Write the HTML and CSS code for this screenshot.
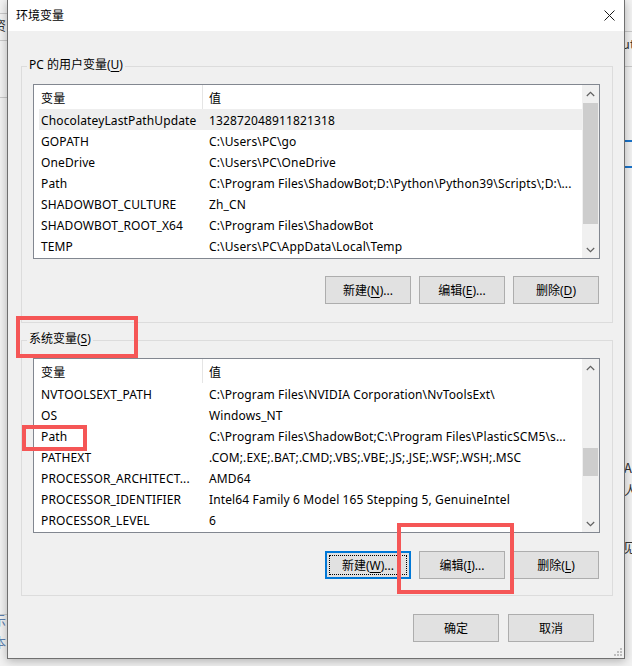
FILE: index.html
```html
<!DOCTYPE html>
<html lang="zh-CN">
<head>
<meta charset="utf-8">
<title>环境变量</title>
<link rel="stylesheet" href="styles.css">
</head>
<body>
<div class="desktop">
  <div class="backdrop">
    <div class="bg-line" style="top:13px;left:0;width:8px"></div>
    <div class="bg-line" style="top:40px;left:0;width:8px"></div>
    <div class="bg-line" style="top:97px;left:0;width:8px"></div>
    <div class="bg-text" style="top:17px;left:-7px">资</div>
    <div class="bg-line" style="top:31px;left:624px;width:8px"></div>
    <div class="bg-text" style="top:36px;left:622px">ut</div>
    <div class="bg-line" style="top:66px;left:624px;width:8px"></div>
    <div class="bg-line blue" style="top:140px;left:624px;width:8px"></div>
    <div class="bg-line blue" style="top:166px;left:624px;width:8px"></div>
    <div class="bg-text" style="top:460px;left:624px">AI</div>
    <div class="bg-text" style="top:482px;left:624px">人</div>
    <div class="bg-text" style="top:539px;left:623px">见</div>
    <div class="bg-line" style="top:614px;left:0;width:8px"></div>
    <div class="bg-text colored" style="top:612px;left:-7px">示</div>
    <div class="bg-text colored" style="top:634px;left:-7px">本</div>
  </div>

  <div class="dialog">
    <div class="titlebar">
      <span class="title">环境变量</span>
      <span class="close">
        <svg width="11" height="11" viewBox="0 0 11 11"><path d="M0.5 0.5 L10.5 10.5 M10.5 0.5 L0.5 10.5" stroke="#1a1a1a" stroke-width="1" fill="none"/></svg>
      </span>
    </div>

    <div class="dialog-body">
      <section class="group group-user">
        <div class="legend">PC 的用户变量(<u>U</u>)</div>
        <div class="listview">
          <div class="lv-main">
            <div class="lv-header"><div class="c1">变量</div><div class="c2">值</div></div>
            <div class="lv-row selected"><div class="c1">ChocolateyLastPathUpdate</div><div class="c2">132872048911821318</div></div>
            <div class="lv-row"><div class="c1">GOPATH</div><div class="c2">C:\Users\PC\go</div></div>
            <div class="lv-row"><div class="c1">OneDrive</div><div class="c2">C:\Users\PC\OneDrive</div></div>
            <div class="lv-row"><div class="c1">Path</div><div class="c2">C:\Program Files\ShadowBot;D:\Python\Python39\Scripts\;D:\...</div></div>
            <div class="lv-row"><div class="c1">SHADOWBOT_CULTURE</div><div class="c2">Zh_CN</div></div>
            <div class="lv-row"><div class="c1">SHADOWBOT_ROOT_X64</div><div class="c2">C:\Program Files\ShadowBot</div></div>
            <div class="lv-row"><div class="c1">TEMP</div><div class="c2">C:\Users\PC\AppData\Local\Temp</div></div>
          </div>
          <div class="scrollbar">
            <div class="sb-btn"><svg width="9" height="6" viewBox="0 0 9 6"><path d="M0.8 5 L4.5 1.3 L8.2 5" stroke="#606060" stroke-width="1.2" fill="none"/></svg></div>
            <div class="sb-track"><div class="sb-thumb" style="margin-top:1px;height:121px"></div></div>
            <div class="sb-btn"><svg width="9" height="6" viewBox="0 0 9 6"><path d="M0.8 1 L4.5 4.7 L8.2 1" stroke="#606060" stroke-width="1.2" fill="none"/></svg></div>
          </div>
        </div>
        <div class="btn-row">
          <button class="btn">新建(<u>N</u>)...</button>
          <button class="btn">编辑(<u>E</u>)...</button>
          <button class="btn">删除(<u>D</u>)</button>
        </div>
      </section>

      <section class="group group-system">
        <div class="legend">系统变量(<u>S</u>)</div>
        <div class="listview">
          <div class="lv-main">
            <div class="lv-header"><div class="c1">变量</div><div class="c2">值</div></div>
            <div class="lv-row"><div class="c1">NVTOOLSEXT_PATH</div><div class="c2">C:\Program Files\NVIDIA Corporation\NvToolsExt\</div></div>
            <div class="lv-row"><div class="c1">OS</div><div class="c2">Windows_NT</div></div>
            <div class="lv-row"><div class="c1">Path</div><div class="c2">C:\Program Files\ShadowBot;C:\Program Files\PlasticSCM5\s...</div></div>
            <div class="lv-row"><div class="c1">PATHEXT</div><div class="c2">.COM;.EXE;.BAT;.CMD;.VBS;.VBE;.JS;.JSE;.WSF;.WSH;.MSC</div></div>
            <div class="lv-row"><div class="c1">PROCESSOR_ARCHITECT...</div><div class="c2">AMD64</div></div>
            <div class="lv-row"><div class="c1">PROCESSOR_IDENTIFIER</div><div class="c2">Intel64 Family 6 Model 165 Stepping 5, GenuineIntel</div></div>
            <div class="lv-row"><div class="c1">PROCESSOR_LEVEL</div><div class="c2">6</div></div>
          </div>
          <div class="scrollbar">
            <div class="sb-btn"><svg width="9" height="6" viewBox="0 0 9 6"><path d="M0.8 5 L4.5 1.3 L8.2 5" stroke="#606060" stroke-width="1.2" fill="none"/></svg></div>
            <div class="sb-track"><div class="sb-thumb" style="margin-top:72px;height:28px"></div></div>
            <div class="sb-btn"><svg width="9" height="6" viewBox="0 0 9 6"><path d="M0.8 1 L4.5 4.7 L8.2 1" stroke="#606060" stroke-width="1.2" fill="none"/></svg></div>
          </div>
        </div>
        <div class="btn-row">
          <button class="btn focused">新建(<u>W</u>)...</button>
          <button class="btn">编辑(<u>I</u>)...</button>
          <button class="btn">删除(<u>L</u>)</button>
        </div>
      </section>

      <div class="footer">
        <button class="btn">确定</button>
        <button class="btn">取消</button>
      </div>
    </div>

    <svg class="grip" width="9" height="9" viewBox="0 0 9 9">
      <rect x="6" y="0" width="2" height="2" fill="#bdbdbd"/>
      <rect x="3" y="3" width="2" height="2" fill="#bdbdbd"/>
      <rect x="6" y="3" width="2" height="2" fill="#bdbdbd"/>
      <rect x="0" y="6" width="2" height="2" fill="#bdbdbd"/>
      <rect x="3" y="6" width="2" height="2" fill="#bdbdbd"/>
      <rect x="6" y="6" width="2" height="2" fill="#bdbdbd"/>
    </svg>
  </div>

  <div class="mark mark-legend"></div>
  <div class="mark mark-path"></div>
  <div class="mark mark-edit"></div>
</div>
</body>
</html>
```

FILE: styles.css
```css
* { box-sizing: border-box; }

html, body {
  margin: 0;
  padding: 0;
}

body {
  width: 632px;
  height: 666px;
  overflow: hidden;
  background: #f2f2f2;
  font-family: "Noto Sans", "Noto Sans CJK SC", sans-serif;
  font-size: 12px;
  color: #000;
}

.desktop {
  position: relative;
  width: 632px;
  height: 666px;
  overflow: hidden;
}

/* things visible behind the dialog */
.backdrop {
  position: absolute;
  inset: 0;
}
.bg-line {
  position: absolute;
  height: 1px;
  background: #c9c9c9;
}
.bg-line.blue {
  height: 2px;
  background: #1a73c9;
}
.bg-text {
  position: absolute;
  font-size: 13px;
  line-height: 16px;
  color: #333;
  font-family: "Noto Sans CJK SC", "Noto Sans", sans-serif;
}
.bg-text.colored {
  color: #5b7fae;
}

/* dialog window */
.dialog {
  position: absolute;
  left: 7px;
  top: 0;
  width: 618px;
  height: 659px;
  background: #f0f0f0;
  border: 1px solid #707070;
  border-top: 0;
  box-shadow: 0 2px 9px rgba(0, 0, 0, 0.28);
  display: flex;
  flex-direction: column;
}

.titlebar {
  height: 31px;
  flex: 0 0 31px;
  background: #fff;
  display: flex;
  align-items: center;
  justify-content: space-between;
  padding: 0 9px 1px 8px;
}
.title {
  font-family: "Noto Sans CJK SC", sans-serif;
  font-size: 12px;
  line-height: 16px;
}
.close {
  display: flex;
  width: 11px;
  height: 11px;
  margin-top: 1px;
}

.dialog-body {
  padding: 35px 11px 0 13px;
  display: flex;
  flex-direction: column;
}

.group {
  border: 1px solid #dcdcdc;
  padding: 0 12px 18px 11px;
}
.group-system {
  margin-top: 17px;
  padding-bottom: 16px;
}
.group-system .btn-row {
  margin-top: 18px;
}

.legend {
  display: table;
  margin: -10px 0 0 -6px;
  padding: 0 2px;
  line-height: 16px;
  height: 16px;
  background: #f0f0f0;
  font-family: "Noto Sans", "Noto Sans CJK SC", sans-serif;
}

u {
  text-decoration: underline;
  text-underline-offset: 2px;
}

/* list view */
.listview {
  margin-top: 11px;
  height: 175px;
  border: 1px solid #828790;
  background: #fff;
  display: flex;
}
.lv-main {
  flex: 1;
  min-width: 0;
  overflow: hidden;
  letter-spacing: 0.13px;
}
.lv-header,
.lv-row {
  display: flex;
  margin-left: 5px;
  white-space: nowrap;
}
.lv-header {
  height: 24px;
  align-items: center;
}
.lv-header .c1 {
  align-self: stretch;
  display: flex;
  align-items: center;
  border-right: 1px solid #e5e5e5;
  padding-top: 1px;
}
.lv-header .c2 { padding-top: 1px; }
.lv-row {
  height: 21px;
  align-items: center;
  padding-top: 2px;
}
.lv-row.selected {
  background: #eeeeee;
}
.c1 {
  width: 164px;
  flex: 0 0 164px;
  padding-left: 2px;
  overflow: hidden;
}
.c2 {
  padding-left: 6px;
  overflow: hidden;
}

.scrollbar {
  width: 17px;
  flex: 0 0 17px;
  background: #f0f0f0;
  display: flex;
  flex-direction: column;
}
.sb-btn {
  height: 17px;
  flex: 0 0 17px;
  display: flex;
  align-items: center;
  justify-content: center;
}
.sb-track {
  flex: 1;
}
.sb-thumb {
  margin-left: 1px;
  margin-right: 1px;
  background: #cdcdcd;
}

/* buttons */
.btn-row {
  margin-top: 17px;
  margin-right: 1px;
  display: flex;
  justify-content: flex-end;
  gap: 8px;
}
.btn {
  width: 86px;
  height: 28px;
  background: #e1e1e1;
  border: 1px solid #adadad;
  border-radius: 0;
  padding: 0 0 1px 0;
  font-family: "Noto Sans", "Noto Sans CJK SC", sans-serif;
  font-size: 12px;
  color: #000;
  position: relative;
}
.btn.focused {
  border-color: #0078d7;
  box-shadow: inset 0 0 0 1px #0078d7;
}
.btn.focused::after {
  content: "";
  position: absolute;
  inset: 3px;
  border: 1px dotted #000;
}

.footer {
  margin-top: 18px;
  padding-right: 19px;
  display: flex;
  justify-content: flex-end;
  gap: 9px;
}

.grip {
  position: absolute;
  right: 1px;
  bottom: 1px;
}

/* red annotation boxes */
.mark {
  position: absolute;
  border: 4px solid #f55656;
}
.mark-legend { left: 16px; top: 316px; width: 122px; height: 42px; }
.mark-path { left: 22px; top: 425px; width: 65px; height: 26px; }
.mark-edit { left: 397px; top: 523px; width: 117px; height: 71px; }
```
